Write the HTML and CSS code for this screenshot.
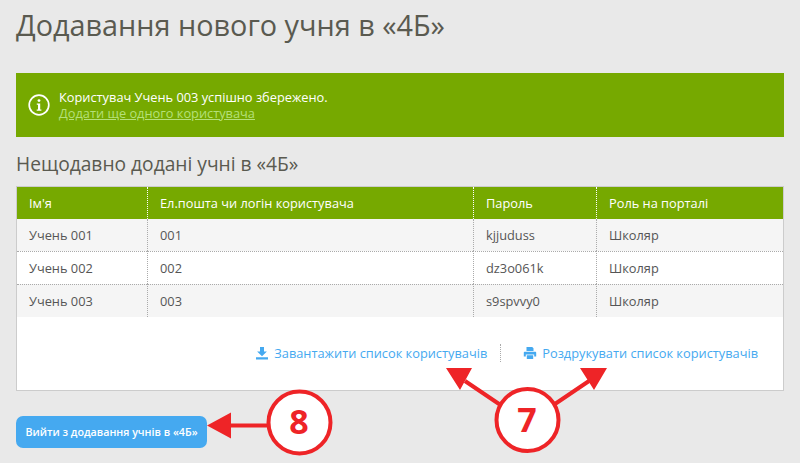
FILE: index.html
```html
<!DOCTYPE html>
<html lang="uk">
<head>
<meta charset="utf-8">
<title>Додавання нового учня</title>
<link rel="stylesheet" href="styles.css">
</head>
<body>
<h1 class="title">Додавання нового учня в «4Б»</h1>
<div class="notice">
  <svg class="notice-icon" viewBox="0 0 22 22" width="22" height="22"><circle cx="11" cy="11" r="9.8" fill="none" stroke="#fff" stroke-width="1.7"/><circle cx="11" cy="6.6" r="1.4" fill="#fff"/><path d="M8.8 9.4h3.4v6h1.2v1.3H8.7v-1.3h1.3v-4.7H8.8z" fill="#fff"/></svg>
  <div class="notice-text">
    <div>Користувач Учень 003 успішно збережено.</div>
    <a class="notice-link" href="#">Додати ще одного користувача</a>
  </div>
</div>
<h2 class="subtitle">Нещодавно додані учні в «4Б»</h2>
<div class="panel">
  <table class="users">
    <colgroup><col class="c1"><col class="c2"><col class="c3"><col class="c4"></colgroup>
    <thead><tr><th>Ім'я</th><th>Ел.пошта чи логін користувача</th><th>Пароль</th><th>Роль на порталі</th></tr></thead>
    <tbody>
      <tr><td>Учень 001</td><td>001</td><td>kjjuduss</td><td>Школяр</td></tr>
      <tr><td>Учень 002</td><td>002</td><td>dz3o061k</td><td>Школяр</td></tr>
      <tr><td>Учень 003</td><td>003</td><td>s9spvvy0</td><td>Школяр</td></tr>
    </tbody>
  </table>
  <div class="actions">
    <a class="action" href="#"><svg viewBox="0 0 14 14" width="14" height="14"><path d="M5 1h4v4.6h2.9L7 10.3 2.100 5.600H5zM1 11.300h12V13.500H1z" fill="#45a9f0"/></svg>Завантажити список користувачів</a>
    <span class="divider"></span>
    <a class="action" href="#"><svg viewBox="0 0 14 14" width="14" height="14"><path d="M3.500 1h5.700l1.300 1.300V5h-7zM1.800 5.700h10.400c.6 0 1 .4 1 1v3.800h-2V8.500H2.800v2h-2V6.700c0-.6.4-1 1-1zM3.800 9.300h6.400v3.700H3.800z" fill="#45a9f0"/></svg>Роздрукувати список користувачів</a>
  </div>
</div>
<button class="exit">Вийти з додавання учнів в «4Б»</button>
<svg class="marks" viewBox="0 0 800 463" width="800" height="463">
  <g fill="#ee2427" stroke="none">
    <path d="M446 368h26l-12 22zM580 368h27l-13 22zM207 425.500l24-13v26z"/>
  </g>
  <g stroke="#ee2427" stroke-width="4" fill="none">
    <path d="M465 381l37 25M589 381l-37 25M228 425.500h40"/>
    <circle cx="299.500" cy="422.500" r="31" fill="#fff"/>
    <circle cx="527.500" cy="420" r="31" fill="#fff"/>
  </g>
  <text class="mark-num" x="299" y="434" text-anchor="middle">8</text>
  <text class="mark-num" x="527" y="432" text-anchor="middle">7</text>
</svg>
</body>
</html>
```
FILE: styles.css
```css
html, body { margin: 0; padding: 0; }
body {
  width: 800px;
  height: 463px;
  overflow: hidden;
  position: relative;
  box-sizing: border-box;
  padding: 0 16px;
  background: #e9e9e9;
  font-family: "Open Sans", "Liberation Sans", sans-serif;
  font-size: 12.8px;
  color: #555;
}
.title {
  margin: 0;
  padding-top: 6px;
  height: 73px;
  box-sizing: border-box;
  font-size: 28.8px;
  line-height: 38px;
  font-weight: 400;
  color: #5a5a50;
}
.notice {
  height: 64px;
  background: #76a900;
  display: flex;
  align-items: center;
  gap: 9px;
  padding-left: 12px;
  color: #fff;
  line-height: 16px;
  box-sizing: border-box;
}
.notice-icon { flex: none; }
.notice-link { color: #b5e07a; text-decoration: underline; }
.subtitle {
  margin: 0;
  height: 49px;
  padding-top: 14px;
  box-sizing: border-box;
  font-size: 19.2px;
  line-height: 26px;
  font-weight: 400;
  color: #5a5a50;
}
.panel {
  height: 205px;
  box-sizing: border-box;
  background: #fff;
  border: 1px solid #ccc;
}
.users {
  width: 100%;
  border-collapse: separate;
  border-spacing: 0;
  table-layout: fixed;
}
.c1 { width: 130px; }
.c2 { width: 326px; }
.c3 { width: 123px; }
.users th {
  height: 32px;
  padding: 0 12px;
  box-sizing: border-box;
  background: #76a900;
  color: #fff;
  font-size: 12.8px;
  font-weight: 400;
  text-align: left;
  border-left: 1px dotted #fff;
}
.users td {
  height: 33px;
  padding: 0 12px;
  box-sizing: border-box;
  font-size: 12.8px;
  border-left: 1px dotted #aaa;
  border-top: 1px dotted #aaa;
}
.users th:first-child, .users td:first-child { border-left: 0; }
.users tbody tr:first-child td { border-top: 0; height: 32px; }
.users tbody tr:nth-child(odd) td { background: #f5f5f5; }
.actions {
  display: flex;
  justify-content: flex-end;
  align-items: center;
  padding: 27px 25px 0 0;
}
.action {
  display: flex;
  align-items: center;
  gap: 5px;
  color: #45a9f0;
  text-decoration: none;
  font-size: 12.8px;
  line-height: 18px;
}
.divider {
  width: 0;
  height: 18px;
  margin: 0 22px 0 13px;
  border-left: 1px dotted #aaa;
}
.exit {
  display: block;
  margin-top: 25px;
  width: 191px;
  height: 32px;
  padding: 0;
  border: 0;
  border-radius: 7px;
  background: #45a9f0;
  color: #fff;
  font-family: inherit;
  font-size: 10.7px;
  font-weight: 600;
}
.marks { position: absolute; left: 0; top: 0; pointer-events: none; }
.mark-num {
  font-family: "Open Sans", sans-serif;
  font-size: 34px;
  font-weight: 700;
  fill: #ee2427;
}
```
